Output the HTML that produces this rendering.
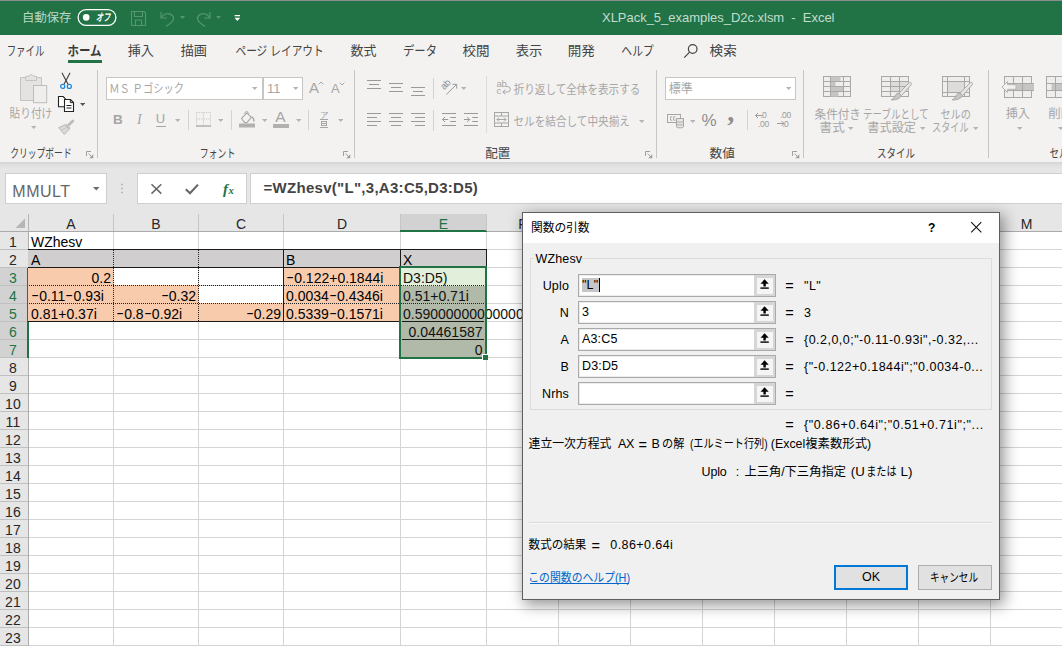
<!DOCTYPE html>
<html lang="ja"><head><meta charset="utf-8"><title>XLPack_5_examples_D2c.xlsm - Excel</title><style>
html,body{margin:0;padding:0}
body{width:1062px;height:646px;overflow:hidden;position:relative;background:#e6e6e6;font-family:"Liberation Sans",sans-serif}
#app{position:absolute;left:0;top:0;width:1062px;height:646px;overflow:hidden}
.a{position:absolute;box-sizing:border-box}
.t{white-space:pre}
.m{display:inline-block;width:8.2px;text-align:center;font-style:normal;transform:scaleX(1.65);position:relative;top:-1px}
.jt{position:absolute;overflow:hidden}
.jt svg{position:absolute;left:0;top:0;display:block}
.sk svg{transform:skewX(-12deg)}
.jt text{font-family:"Liberation Sans","Noto Sans CJK JP",sans-serif;white-space:pre}
</style></head><body><div id="app">
<div class="a" style="left:0px;top:0px;width:1062px;height:646px;background:#e6e6e6"></div>
<div class="a" style="left:0px;top:0px;width:1062px;height:1px;background:#8d8d8d"></div>
<div class="a" style="left:0px;top:1px;width:1062px;height:34px;background:#217346"></div>
<div class="a" style="left:0px;top:35px;width:1062px;height:127px;background:#f3f2f1"></div>
<div class="a" style="left:0px;top:162px;width:1062px;height:7px;background:linear-gradient(#d4d4d4,#e0e0e0 45%,#e6e6e6)"></div>
<div class="jt " style="left:22.00px;top:8.90px;width:51.00px;height:16.80px;font-size:9.6px"><svg width="51.00" height="16.80" viewBox="0 0 51.00 16.80" fill="#b9d8c8"><text x="0" y="12.96" font-size="12" textLength="49.5" lengthAdjust="spacingAndGlyphs">自動保存</text></svg></div>
<svg class="a" style="left:76px;top:8px" width="42" height="19" viewBox="0 0 42 19" ><rect x="2.1" y="1.6" width="37.8" height="15.8" rx="7.9" fill="none" stroke="#fff" stroke-width="1.3"/><circle cx="10.2" cy="9.4" r="3.3" fill="#fff"/></svg>
<div class="jt sk" style="left:95.20px;top:10.45px;width:17.30px;height:14.70px;font-size:8.4px"><svg width="17.30" height="14.70" viewBox="0 0 17.30 14.70" fill="#fff"><text x="1.56" y="11.34" font-size="10.5" font-weight="bold" textLength="14.5" lengthAdjust="spacingAndGlyphs">オフ</text></svg></div>
<svg class="a" style="left:130px;top:10px" width="18" height="18" viewBox="0 0 18 18" ><g fill="none" stroke="#559571" stroke-width="1.1"><path d="M1.5 1.5h12.6l1.4 1.4v12.6h-14z"/><path d="M4.5 1.5v5h8v-5"/><path d="M5.5 15.5v-5.5h6v5.5"/></g></svg>
<svg class="a" style="left:159px;top:10px" width="18" height="18" viewBox="0 0 18 18" ><g fill="none" stroke="#559571" stroke-width="1.2"><path d="M2 2v6h6"/><path d="M2.3 7.7c2.5-4.5 8-5.3 11-2.2c2.8 3 1.2 6.2-6.3 11"/></g></svg>
<svg class="a" style="left:180px;top:15.5px" width="5" height="3" viewBox="0 0 5 3" ><path d="M0 0h5 l-2.5 3 z" fill="#559571"/></svg>
<svg class="a" style="left:194px;top:10px" width="18" height="18" viewBox="0 0 18 18" ><g fill="none" stroke="#559571" stroke-width="1.2"><path d="M16 2v6h-6"/><path d="M15.7 7.7c-2.5-4.5-8-5.3-11-2.2c-2.8 3-1.2 6.2 6.3 11"/></g></svg>
<svg class="a" style="left:215.5px;top:15.5px" width="5" height="3" viewBox="0 0 5 3" ><path d="M0 0h5 l-2.5 3 z" fill="#559571"/></svg>
<svg class="a" style="left:234px;top:14px" width="7" height="8" viewBox="0 0 7 8" ><path d="M0.7 1h5.3v1.2h-5.3z M0.5 3.8h5.7l-2.85 3.3z" fill="#fff"/></svg>
<div class="a t" style="top:8.8px;font-size:13px;line-height:17px;color:#c3ddce;letter-spacing:-0.025px;left:602px;">XLPack_5_examples_D2c.xlsm  -  Excel</div>
<div class="jt " style="left:6.00px;top:41.20px;width:40.00px;height:18.20px;font-size:10.4px"><svg width="40.00" height="18.20" viewBox="0 0 40.00 18.20" fill="#444"><text x="0.63" y="14.04" font-size="13" textLength="37.8" lengthAdjust="spacingAndGlyphs">ファイル</text></svg></div>
<div class="jt " style="left:66.00px;top:41.20px;width:37.00px;height:18.20px;font-size:10.4px"><svg width="37.00" height="18.20" viewBox="0 0 37.00 18.20" fill="#3a3a3a"><text x="1.41" y="14.04" font-size="13" font-weight="bold" textLength="34.1" lengthAdjust="spacingAndGlyphs">ホーム</text></svg></div>
<div class="a" style="left:68px;top:60px;width:34px;height:3px;background:#217346"></div>
<div class="jt " style="left:126.00px;top:41.20px;width:29.40px;height:18.20px;font-size:10.4px"><svg width="29.40" height="18.20" viewBox="0 0 29.40 18.20" fill="#444"><text x="1.65" y="14.04" font-size="13" textLength="26.2" lengthAdjust="spacingAndGlyphs">挿入</text></svg></div>
<div class="jt " style="left:179.00px;top:41.20px;width:29.20px;height:18.20px;font-size:10.4px"><svg width="29.20" height="18.20" viewBox="0 0 29.20 18.20" fill="#444"><text x="1.63" y="14.04" font-size="13" textLength="26.3" lengthAdjust="spacingAndGlyphs">描画</text></svg></div>
<div class="jt " style="left:233.50px;top:41.20px;width:90.10px;height:18.20px;font-size:10.4px"><svg width="90.10" height="18.20" viewBox="0 0 90.10 18.20" fill="#444"><text x="1.43" y="14.04" font-size="13" textLength="88.3" lengthAdjust="spacingAndGlyphs">ページ レイアウト</text></svg></div>
<div class="jt " style="left:349.00px;top:41.20px;width:29.00px;height:18.20px;font-size:10.4px"><svg width="29.00" height="18.20" viewBox="0 0 29.00 18.20" fill="#444"><text x="1.56" y="14.04" font-size="13" textLength="25.9" lengthAdjust="spacingAndGlyphs">数式</text></svg></div>
<div class="jt " style="left:402.00px;top:41.20px;width:35.50px;height:18.20px;font-size:10.4px"><svg width="35.50" height="18.20" viewBox="0 0 35.50 18.20" fill="#444"><text x="1.04" y="14.04" font-size="13" textLength="33.9" lengthAdjust="spacingAndGlyphs">データ</text></svg></div>
<div class="jt " style="left:461.00px;top:41.20px;width:29.50px;height:18.20px;font-size:10.4px"><svg width="29.50" height="18.20" viewBox="0 0 29.50 18.20" fill="#444"><text x="1.57" y="14.04" font-size="13" textLength="27.1" lengthAdjust="spacingAndGlyphs">校閲</text></svg></div>
<div class="jt " style="left:514.00px;top:41.20px;width:29.50px;height:18.20px;font-size:10.4px"><svg width="29.50" height="18.20" viewBox="0 0 29.50 18.20" fill="#444"><text x="1.63" y="14.04" font-size="13" textLength="26.7" lengthAdjust="spacingAndGlyphs">表示</text></svg></div>
<div class="jt " style="left:567.00px;top:41.20px;width:29.50px;height:18.20px;font-size:10.4px"><svg width="29.50" height="18.20" viewBox="0 0 29.50 18.20" fill="#444"><text x="0.79" y="14.04" font-size="13" textLength="27.1" lengthAdjust="spacingAndGlyphs">開発</text></svg></div>
<div class="jt " style="left:620.30px;top:41.20px;width:35.70px;height:18.20px;font-size:10.4px"><svg width="35.70" height="18.20" viewBox="0 0 35.70 18.20" fill="#444"><text x="1.33" y="14.04" font-size="13" textLength="32.5" lengthAdjust="spacingAndGlyphs">ヘルプ</text></svg></div>
<svg class="a" style="left:683px;top:43px" width="16" height="16" viewBox="0 0 16 16" ><g fill="none" stroke="#444" stroke-width="1.2"><circle cx="9.7" cy="6" r="4.3"/><path d="M6.6 9.2L1.2 14.7"/></g></svg>
<div class="jt " style="left:708.00px;top:41.20px;width:30.00px;height:18.20px;font-size:10.4px"><svg width="30.00" height="18.20" viewBox="0 0 30.00 18.20" fill="#444"><text x="1.59" y="14.04" font-size="13" textLength="27.2" lengthAdjust="spacingAndGlyphs">検索</text></svg></div>
<svg class="a" style="left:19px;top:71px" width="30" height="34" viewBox="0 0 30 34" ><path d="M1.5 6.5h5.2v-1.2h3.2a2.3 2.3 0 0 1 4.4 0h3.2v1.2h5v23h-21z" fill="#e4e3e2" stroke="#c4c3c2"/><path d="M6.7 6.5v3h10.8v-3" fill="none" stroke="#c4c3c2"/><rect x="14.5" y="14.5" width="13.2" height="17.2" fill="#efeeed" stroke="#bdbcbb"/></svg>
<div class="jt " style="left:8.20px;top:105.20px;width:45.60px;height:16.80px;font-size:9.6px"><svg width="45.60" height="16.80" viewBox="0 0 45.60 16.80" fill="#a6a6a6"><text x="1.60" y="12.96" font-size="12" textLength="42.7" lengthAdjust="spacingAndGlyphs">貼り付け</text></svg></div>
<svg class="a" style="left:31px;top:126px" width="5.4" height="3" viewBox="0 0 5.4 3" ><path d="M0 0h5.4 l-2.7 3 z" fill="#b4b3b2"/></svg>
<svg class="a" style="left:59.2px;top:71.6px" width="14" height="18" viewBox="0 0 14 18" ><g fill="none" stroke="#444" stroke-width="1.15" stroke-linecap="round"><path d="M3.2 1.2L9 12.3"/><path d="M10.8 1.2L5 12.3"/></g><g fill="#fff" stroke="#1e86d9" stroke-width="1.3"><circle cx="3.7" cy="14.4" r="2"/><circle cx="10.3" cy="14.4" r="2"/></g></svg>
<svg class="a" style="left:57px;top:95px" width="19" height="18" viewBox="0 0 19 18" ><path d="M7.5 11.8h-6v-10.3h4.6l2.6 2.6" fill="#fff" stroke="#222" stroke-width="1.1"/><path d="M7.5 4.5h6l3 3v9h-9z" fill="#fff" stroke="#222" stroke-width="1.1"/><path d="M13.3 4.6v3h3" fill="none" stroke="#222" stroke-width="1"/><path d="M9.5 10.5h5M9.5 13h5" stroke="#222" stroke-width="1"/></svg>
<svg class="a" style="left:79.7px;top:103px" width="5.2" height="3" viewBox="0 0 5.2 3" ><path d="M0 0h5.2 l-2.6 3 z" fill="#555"/></svg>
<svg class="a" style="left:57px;top:119px" width="18" height="17" viewBox="0 0 18 17" ><path d="M15.800 2L12 5.800" stroke="#bdbcbb" stroke-width="2.700" stroke-linecap="round" fill="none"/><path d="M9.300 4.600l4.300 4.300-1.300 1.300-4.300-4.300z" fill="#c4c3c2"/><path d="M1.600 8.600L7.900 5.800l4.400 4.500-5 5.200z" fill="#dad9d8" stroke="#b7b6b5" stroke-width=".9" stroke-linejoin="round"/><path d="M4.300 11.300l5.800-3.200" stroke="#c2c1c0" stroke-width=".8" fill="none"/></svg>
<div class="jt " style="left:8.80px;top:145.00px;width:63.60px;height:16.80px;font-size:9.6px"><svg width="63.60" height="16.80" viewBox="0 0 63.60 16.80" fill="#444"><text x="1.13" y="12.96" font-size="12" textLength="61.6" lengthAdjust="spacingAndGlyphs">クリップボード</text></svg></div>
<svg class="a" style="left:86px;top:151px" width="8" height="8" viewBox="0 0 8 8" ><g fill="none" stroke="#a19f9d" stroke-width="1"><path d="M0.5 5V0.5H5"/><path d="M2.6 2.6L6 6"/></g><path d="M7.3 3.2v4.1H3.2z" fill="#a19f9d"/></svg>
<div class="a" style="left:97px;top:69.5px;width:1px;height:88px;background:#c8c6c4"></div>
<div class="a" style="left:106px;top:77px;width:157px;height:23px;background:#fff;border:1px solid #c8c6c4"></div>
<div class="a" style="left:263px;top:77px;width:40px;height:23px;background:#fff;border:1px solid #c8c6c4"></div>
<div class="jt " style="left:108.50px;top:80.20px;width:75.80px;height:16.80px;font-size:9.6px"><svg width="75.80" height="16.80" viewBox="0 0 75.80 16.80" fill="#a6a6a6"><text x="0.21" y="12.96" font-size="12" textLength="74.8" lengthAdjust="spacingAndGlyphs">ＭＳ Ｐゴシック</text></svg></div>
<svg class="a" style="left:252px;top:87px" width="5.4" height="3" viewBox="0 0 5.4 3" ><path d="M0 0h5.4 l-2.7 3 z" fill="#b4b3b2"/></svg>
<div class="a t" style="top:80.1px;font-size:13px;line-height:17px;color:#a6a6a6;left:267px;">11</div>
<svg class="a" style="left:293px;top:87px" width="5.4" height="3" viewBox="0 0 5.4 3" ><path d="M0 0h5.4 l-2.7 3 z" fill="#b4b3b2"/></svg>
<div class="a t" style="top:77.5px;font-size:15px;line-height:20px;color:#a6a6a6;left:309px;">A</div>
<svg class="a" style="left:318px;top:81px" width="6" height="4" viewBox="0 0 6 4" ><path d="M.6 3.4L3 1l2.4 2.4" fill="none" stroke="#a6a6a6" stroke-width="1"/></svg>
<div class="a t" style="top:80px;font-size:13px;line-height:17px;color:#a6a6a6;left:331px;">A</div>
<svg class="a" style="left:339px;top:82px" width="6" height="4" viewBox="0 0 6 4" ><path d="M.6 .6L3 3l2.4-2.4" fill="none" stroke="#a6a6a6" stroke-width="1"/></svg>
<div class="a t" style="top:110.5px;font-size:13.5px;line-height:18px;color:#a6a6a6;font-weight:bold;left:113px;">B</div>
<div class="a t" style="top:110.5px;font-size:14px;line-height:18px;color:#a6a6a6;font-style:italic;font-family:'Liberation Serif',serif;left:137px;">I</div>
<div class="a t" style="top:110.3px;font-size:13px;line-height:17px;color:#a6a6a6;left:155.8px;">U</div>
<div class="a" style="left:156px;top:125.6px;width:9.6px;height:1px;background:#a6a6a6"></div>
<svg class="a" style="left:175px;top:119px" width="5.4" height="3" viewBox="0 0 5.4 3" ><path d="M0 0h5.4 l-2.7 3 z" fill="#b4b3b2"/></svg>
<div class="a" style="left:188px;top:110px;width:1px;height:20px;background:#d4d2d0"></div>
<svg class="a" style="left:195px;top:111px" width="17" height="17" viewBox="0 0 17 17" ><g stroke="#c9c8c7" stroke-width="1" stroke-dasharray="1.2 1.2"><path d="M1.5 1.5h14M1.5 1.5v13M15.5 1.5v13M8.5 1.5v13M1.5 8h14"/></g><path d="M1 15h15" stroke="#a6a6a6" stroke-width="1.3"/></svg>
<svg class="a" style="left:218px;top:119px" width="5.4" height="3" viewBox="0 0 5.4 3" ><path d="M0 0h5.4 l-2.7 3 z" fill="#b4b3b2"/></svg>
<div class="a" style="left:231px;top:110px;width:1px;height:20px;background:#d4d2d0"></div>
<svg class="a" style="left:238px;top:110px" width="18" height="18" viewBox="0 0 18 18" ><path d="M3.500 8.300l5.300-5.500 4.600 4.600-4.600 5.200h-2.200z" fill="#f3f2f1" stroke="#a6a6a6" stroke-width="1.100" stroke-linejoin="round"/><path d="M7.200 4.400c-.6-1.800 .2-2.900 1.300-2.900 1.200 0 1.900 1.100 1.700 2.600" fill="none" stroke="#a6a6a6" stroke-width="1"/><path d="M13.600 6.800c1.700 1 2.500 2.500 2.300 4.800" fill="none" stroke="#a6a6a6" stroke-width="1.300"/><rect x="1" y="13.500" width="16" height="4" fill="#b3b1af"/></svg>
<svg class="a" style="left:262px;top:119px" width="5.4" height="3" viewBox="0 0 5.4 3" ><path d="M0 0h5.4 l-2.7 3 z" fill="#b4b3b2"/></svg>
<div class="a t" style="top:106.6px;font-size:15.5px;line-height:20px;color:#a6a6a6;left:275.3px;">A</div>
<div class="a" style="left:273px;top:123.5px;width:16px;height:4px;background:#b3b1af"></div>
<svg class="a" style="left:296px;top:119px" width="5.4" height="3" viewBox="0 0 5.4 3" ><path d="M0 0h5.4 l-2.7 3 z" fill="#b4b3b2"/></svg>
<div class="a" style="left:308px;top:110px;width:1px;height:20px;background:#d4d2d0"></div>
<div class="jt " style="left:318.50px;top:108.60px;width:11.00px;height:11.20px;font-size:6.4px"><svg width="11.00" height="11.20" viewBox="0 0 11.00 11.20" fill="#a6a6a6"><text x="0.92" y="8.64" font-size="8" textLength="8.6" lengthAdjust="spacingAndGlyphs">ア</text></svg></div>
<svg class="a" style="left:319px;top:118px" width="10" height="11" viewBox="0 0 10 11" ><g stroke="#a6a6a6" stroke-width="1" fill="none"><path d="M1 1.500h8M1 9.500h8"/><rect x="2.500" y="3.500" width="5" height="4"/><path d="M2.500 5.500h5"/></g></svg>
<svg class="a" style="left:338px;top:119px" width="5.4" height="3" viewBox="0 0 5.4 3" ><path d="M0 0h5.4 l-2.7 3 z" fill="#b4b3b2"/></svg>
<div class="jt " style="left:199.00px;top:145.00px;width:37.00px;height:16.80px;font-size:9.6px"><svg width="37.00" height="16.80" viewBox="0 0 37.00 16.80" fill="#444"><text x="0.71" y="12.96" font-size="12" textLength="35.6" lengthAdjust="spacingAndGlyphs">フォント</text></svg></div>
<svg class="a" style="left:343px;top:151px" width="8" height="8" viewBox="0 0 8 8" ><g fill="none" stroke="#a19f9d" stroke-width="1"><path d="M0.5 5V0.5H5"/><path d="M2.6 2.6L6 6"/></g><path d="M7.3 3.2v4.1H3.2z" fill="#a19f9d"/></svg>
<div class="a" style="left:354px;top:69.5px;width:1px;height:88px;background:#c8c6c4"></div>
<svg class="a" style="left:367px;top:80px" width="16" height="16" viewBox="0 0 16 16" ><g stroke="#9a9998" stroke-width="1"><path d="M0 0.5H14"/><path d="M2 4.5H12"/><path d="M0 8.5H14"/></g></svg>
<svg class="a" style="left:389px;top:83px" width="16" height="16" viewBox="0 0 16 16" ><g stroke="#9a9998" stroke-width="1"><path d="M0 0.5H14"/><path d="M2 4.5H12"/><path d="M0 8.5H14"/></g></svg>
<svg class="a" style="left:411px;top:87px" width="16" height="16" viewBox="0 0 16 16" ><g stroke="#9a9998" stroke-width="1"><path d="M0 0.5H14"/><path d="M2 4.5H12"/><path d="M0 8.5H14"/></g></svg>
<div class="a" style="left:433px;top:78px;width:1px;height:21px;background:#d4d2d0"></div>
<svg class="a" style="left:439px;top:78px" width="20" height="19" viewBox="0 0 20 19" ><g fill="none" stroke="#9a9998" stroke-width="1"><path d="M7.300 16.500L17.500 6.500"/><path d="M13.400 6.300h4.300v4.300"/></g><text x="0" y="0" font-size="9.5" fill="#8f8e8d" font-family="Liberation Sans, sans-serif" letter-spacing="-.3" transform="translate(5.300,12.300) rotate(-47)">ab</text></svg>
<svg class="a" style="left:461px;top:87px" width="5.4" height="3" viewBox="0 0 5.4 3" ><path d="M0 0h5.4 l-2.7 3 z" fill="#b4b3b2"/></svg>
<svg class="a" style="left:367px;top:113px" width="16" height="16" viewBox="0 0 16 16" ><g stroke="#9a9998" stroke-width="1"><path d="M0 0.5H14"/><path d="M0 4.5H10"/><path d="M0 8.5H14"/><path d="M0 12.5H10"/></g></svg>
<svg class="a" style="left:389px;top:113px" width="16" height="16" viewBox="0 0 16 16" ><g stroke="#9a9998" stroke-width="1"><path d="M0 0.5H14"/><path d="M2 4.5H12"/><path d="M0 8.5H14"/><path d="M2 12.5H12"/></g></svg>
<svg class="a" style="left:411px;top:113px" width="16" height="16" viewBox="0 0 16 16" ><g stroke="#9a9998" stroke-width="1"><path d="M0 0.5H14"/><path d="M4 4.5H14"/><path d="M0 8.5H14"/><path d="M4 12.5H14"/></g></svg>
<div class="a" style="left:433px;top:110px;width:1px;height:21px;background:#d4d2d0"></div>
<svg class="a" style="left:442px;top:113px" width="16" height="14" viewBox="0 0 16 14" ><g stroke="#9a9998" stroke-width="1" fill="none"><path d="M0 .5h14M8.300 4.500h5.700M8.300 8.500h5.700M0 12.500h14"/><path d="M6.200 6.500h-5.700M3 4L.5 6.500 3 9"/></g></svg>
<svg class="a" style="left:464px;top:113px" width="16" height="14" viewBox="0 0 16 14" ><g stroke="#9a9998" stroke-width="1" fill="none"><path d="M0 .5h14M8.300 4.500h5.700M8.300 8.500h5.700M0 12.500h14"/><path d="M0 6.500h5.700M3.200 4L5.700 6.500 3.200 9"/></g></svg>
<div class="a" style="left:486px;top:75.5px;width:1px;height:57.5px;background:#dddbd9"></div>
<div class="a t" style="left:496.500px;top:79.500px;font-size:9.5px;line-height:8px;color:#a6a6a6;letter-spacing:-.2px">ab</div>
<div class="a t" style="left:496.500px;top:87px;font-size:9.5px;line-height:8px;color:#a6a6a6">c</div>
<svg class="a" style="left:501px;top:86px" width="10" height="10" viewBox="0 0 10 10" ><g fill="none" stroke="#a6a6a6" stroke-width="1"><path d="M5 .5h1.500a2.500 2.500 0 0 1 0 5.500h-4.500"/><path d="M4.300 3.600L1.800 6l2.500 2.400"/></g></svg>
<div class="jt " style="left:512.00px;top:80.90px;width:129.00px;height:16.80px;font-size:9.6px"><svg width="129.00" height="16.80" viewBox="0 0 129.00 16.80" fill="#a6a6a6"><text x="1.68" y="12.96" font-size="12" textLength="126.7" lengthAdjust="spacingAndGlyphs">折り返して全体を表示する</text></svg></div>
<svg class="a" style="left:493px;top:111px" width="17" height="17" viewBox="0 0 17 17" ><g fill="none" stroke="#a6a6a6" stroke-width="1"><rect x="1.500" y="1.500" width="14" height="14"/><path d="M1.500 5h14M1.500 12h14M8.500 1.500V5M8.500 12v3.500"/><path d="M4 8.500h9M6 6.500L4 8.500l2 2M11 6.500l2 2-2 2"/></g></svg>
<div class="jt " style="left:512.00px;top:112.60px;width:119.00px;height:16.80px;font-size:9.6px"><svg width="119.00" height="16.80" viewBox="0 0 119.00 16.80" fill="#a6a6a6"><text x="1.42" y="12.96" font-size="12" textLength="116.5" lengthAdjust="spacingAndGlyphs">セルを結合して中央揃え</text></svg></div>
<svg class="a" style="left:639px;top:119.5px" width="5.4" height="3" viewBox="0 0 5.4 3" ><path d="M0 0h5.4 l-2.7 3 z" fill="#b4b3b2"/></svg>
<div class="jt " style="left:483.50px;top:145.00px;width:28.00px;height:16.80px;font-size:9.6px"><svg width="28.00" height="16.80" viewBox="0 0 28.00 16.80" fill="#444"><text x="1.28" y="12.96" font-size="12" textLength="25.2" lengthAdjust="spacingAndGlyphs">配置</text></svg></div>
<svg class="a" style="left:645px;top:151px" width="8" height="8" viewBox="0 0 8 8" ><g fill="none" stroke="#a19f9d" stroke-width="1"><path d="M0.5 5V0.5H5"/><path d="M2.6 2.6L6 6"/></g><path d="M7.3 3.2v4.1H3.2z" fill="#a19f9d"/></svg>
<div class="a" style="left:656px;top:69.5px;width:1px;height:88px;background:#c8c6c4"></div>
<div class="a" style="left:665px;top:77px;width:131px;height:23px;background:#fff;border:1px solid #c8c6c4"></div>
<div class="jt " style="left:666.50px;top:80.20px;width:27.00px;height:16.80px;font-size:9.6px"><svg width="27.00" height="16.80" viewBox="0 0 27.00 16.80" fill="#a6a6a6"><text x="1.63" y="12.96" font-size="12" textLength="24" lengthAdjust="spacingAndGlyphs">標準</text></svg></div>
<svg class="a" style="left:785.5px;top:87px" width="5.4" height="3" viewBox="0 0 5.4 3" ><path d="M0 0h5.4 l-2.7 3 z" fill="#b4b3b2"/></svg>
<svg class="a" style="left:667px;top:113px" width="18" height="16" viewBox="0 0 18 16" ><rect x=".5" y="1.500" width="13" height="8" fill="#f3f2f1" stroke="#a6a6a6"/><path d="M5.300 3.800h-1.800v3.400h1.800M8.500 3.800h-1.800v3.400h1.800" fill="none" stroke="#a6a6a6" stroke-width=".9"/><path d="M9.500 5.500h7v8.300c0 1.400-7 1.400-7 0z" fill="#e6e5e4" stroke="#a6a6a6"/><path d="M9.500 8.200c0 1.300 7 1.300 7 0M9.500 11c0 1.300 7 1.300 7 0" fill="none" stroke="#a6a6a6" stroke-width=".9"/></svg>
<svg class="a" style="left:690px;top:119.5px" width="5.4" height="3" viewBox="0 0 5.4 3" ><path d="M0 0h5.4 l-2.7 3 z" fill="#b4b3b2"/></svg>
<div class="a t" style="top:109.5px;font-size:17px;line-height:22px;color:#8f8e8d;left:701.5px;">%</div>
<div class="a t" style="top:94.3px;font-size:28px;line-height:36px;color:#8f8e8d;font-weight:bold;font-family:'Liberation Serif',serif;left:727.3px;">,</div>
<div class="a" style="left:747px;top:110px;width:1px;height:20px;background:#d4d2d0"></div>
<div class="a t" style="left:762px;top:111px;font-size:8.5px;line-height:8px;color:#9c9b9a;letter-spacing:-.3px">0</div>
<div class="a t" style="left:758px;top:119.500px;font-size:8.5px;line-height:8px;color:#9c9b9a;letter-spacing:-.3px">.00</div>
<svg class="a" style="left:755px;top:111.5px" width="8" height="7" viewBox="0 0 8 7" ><g fill="none" stroke="#9c9b9a" stroke-width="1"><path d="M7.500 3.500h-7M3 1L.5 3.500 3 6"/></g></svg>
<div class="a t" style="left:760.5px;top:111px;font-size:8.5px;line-height:8px;color:#9c9b9a">.</div>
<div class="a t" style="left:780px;top:111px;font-size:8.5px;line-height:8px;color:#9c9b9a;letter-spacing:-.3px">.00</div>
<div class="a t" style="left:784px;top:119.500px;font-size:8.5px;line-height:8px;color:#9c9b9a;letter-spacing:-.3px">0</div>
<svg class="a" style="left:777px;top:120px" width="8" height="7" viewBox="0 0 8 7" ><g fill="none" stroke="#9c9b9a" stroke-width="1"><path d="M0 3.500h7M4.500 1L7 3.500 4.500 6"/></g></svg>
<div class="a t" style="left:782.5px;top:119.500px;font-size:8.5px;line-height:8px;color:#9c9b9a">.</div>
<div class="jt " style="left:708.00px;top:145.00px;width:28.50px;height:16.80px;font-size:9.6px"><svg width="28.50" height="16.80" viewBox="0 0 28.50 16.80" fill="#444"><text x="1.57" y="12.96" font-size="12" textLength="25.4" lengthAdjust="spacingAndGlyphs">数値</text></svg></div>
<svg class="a" style="left:792px;top:151px" width="8" height="8" viewBox="0 0 8 8" ><g fill="none" stroke="#a19f9d" stroke-width="1"><path d="M0.5 5V0.5H5"/><path d="M2.6 2.6L6 6"/></g><path d="M7.3 3.2v4.1H3.2z" fill="#a19f9d"/></svg>
<div class="a" style="left:803px;top:69.5px;width:1px;height:88px;background:#c8c6c4"></div>
<svg class="a" style="left:823px;top:75px" width="29" height="23" viewBox="0 0 29 23" ><rect x=".5" y="1.500" width="27" height="20" fill="#efeeed" stroke="#a9a8a7"/><rect x="7.500" y="1.500" width="10" height="5" fill="#c6c5c4"/><rect x="7.500" y="6.500" width="5" height="5" fill="#c6c5c4"/><rect x="7.500" y="11.500" width="13" height="5" fill="#c6c5c4"/><rect x="7.500" y="16.500" width="8" height="5" fill="#c6c5c4"/><path d="M.5 6.500h27M.5 11.500h27M.5 16.500h27M7.500 1.500v20M20.500 1.500v20" stroke="#a9a8a7" fill="none"/></svg>
<div class="jt " style="left:812.50px;top:105.60px;width:48.50px;height:16.80px;font-size:9.6px"><svg width="48.50" height="16.80" viewBox="0 0 48.50 16.80" fill="#a6a6a6"><text x="1.55" y="12.96" font-size="12" textLength="46.4" lengthAdjust="spacingAndGlyphs">条件付き</text></svg></div>
<div class="jt " style="left:818.00px;top:119.20px;width:28.50px;height:16.80px;font-size:9.6px"><svg width="28.50" height="16.80" viewBox="0 0 28.50 16.80" fill="#a6a6a6"><text x="1.30" y="12.96" font-size="12" textLength="25.6" lengthAdjust="spacingAndGlyphs">書式</text></svg></div>
<svg class="a" style="left:848px;top:126.5px" width="5.4" height="3" viewBox="0 0 5.4 3" ><path d="M0 0h5.4 l-2.7 3 z" fill="#b4b3b2"/></svg>
<svg class="a" style="left:881px;top:75px" width="32" height="27" viewBox="0 0 32 27" ><rect x=".5" y="1.500" width="27" height="20" fill="#efeeed" stroke="#a9a8a7"/><rect x="9.500" y="6.500" width="18" height="10" fill="#dddcdb"/><path d="M.5 6.500h27M.5 11.500h27M.5 16.500h27M9.500 1.500v20M18.500 1.500v20" stroke="#a9a8a7" fill="none"/><path d="M29.800 7.500c1 .8 .8 1.700 .2 2.500l-9.500 10.500-2.500-2.200 9.800-10.300c.7-.8 1.400-1 2-.5z" fill="#e9e8e7" stroke="#a9a8a7"/><path d="M18 18.300l2.500 2.200c-1.500 3.300-6 4.800-10.500 4.300 2.500-1 3.500-2.300 4.300-4.300.7-1.700 2.200-2.500 3.700-2.200z" fill="#c6c5c4" stroke="#a9a8a7"/></svg>
<div class="jt " style="left:862.00px;top:105.60px;width:67.50px;height:16.80px;font-size:9.6px"><svg width="67.50" height="16.80" viewBox="0 0 67.50 16.80" fill="#a6a6a6"><text x="1.11" y="12.96" font-size="12" textLength="65.5" lengthAdjust="spacingAndGlyphs">テーブルとして</text></svg></div>
<div class="jt " style="left:865.50px;top:119.20px;width:51.50px;height:16.80px;font-size:9.6px"><svg width="51.50" height="16.80" viewBox="0 0 51.50 16.80" fill="#a6a6a6"><text x="1.33" y="12.96" font-size="12" textLength="48.7" lengthAdjust="spacingAndGlyphs">書式設定</text></svg></div>
<svg class="a" style="left:919.5px;top:126.5px" width="5.4" height="3" viewBox="0 0 5.4 3" ><path d="M0 0h5.4 l-2.7 3 z" fill="#b4b3b2"/></svg>
<svg class="a" style="left:941.5px;top:75px" width="32" height="27" viewBox="0 0 32 27" ><rect x=".5" y="1.500" width="27" height="20" fill="#efeeed" stroke="#a9a8a7"/><rect x="5.500" y="6.500" width="17" height="11" fill="#dddcdb"/><path d="M.5 6.500h27M.5 17.500h27M5.500 1.500v20M22.500 1.500v20" stroke="#a9a8a7" fill="none"/><path d="M29.800 7.500c1 .8 .8 1.700 .2 2.500l-9.500 10.500-2.500-2.200 9.800-10.300c.7-.8 1.400-1 2-.5z" fill="#e9e8e7" stroke="#a9a8a7"/><path d="M18 18.300l2.500 2.200c-1.500 3.300-6 4.800-10.500 4.300 2.500-1 3.500-2.300 4.300-4.300.7-1.700 2.200-2.500 3.700-2.200z" fill="#c6c5c4" stroke="#a9a8a7"/></svg>
<div class="jt " style="left:939.00px;top:105.60px;width:33.00px;height:16.80px;font-size:9.6px"><svg width="33.00" height="16.80" viewBox="0 0 33.00 16.80" fill="#a6a6a6"><text x="1.39" y="12.96" font-size="12" textLength="30.5" lengthAdjust="spacingAndGlyphs">セルの</text></svg></div>
<div class="jt " style="left:930.50px;top:119.20px;width:39.00px;height:16.80px;font-size:9.6px"><svg width="39.00" height="16.80" viewBox="0 0 39.00 16.80" fill="#a6a6a6"><text x="1.09" y="12.96" font-size="12" textLength="36.4" lengthAdjust="spacingAndGlyphs">スタイル</text></svg></div>
<svg class="a" style="left:972.5px;top:126.5px" width="5.4" height="3" viewBox="0 0 5.4 3" ><path d="M0 0h5.4 l-2.7 3 z" fill="#b4b3b2"/></svg>
<div class="jt " style="left:875.50px;top:145.00px;width:40.50px;height:16.80px;font-size:9.6px"><svg width="40.50" height="16.80" viewBox="0 0 40.50 16.80" fill="#444"><text x="1.05" y="12.96" font-size="12" textLength="37.9" lengthAdjust="spacingAndGlyphs">スタイル</text></svg></div>
<div class="a" style="left:988px;top:69.5px;width:1px;height:88px;background:#c8c6c4"></div>
<svg class="a" style="left:1001px;top:75px" width="35" height="24" viewBox="0 0 35 24" ><rect x="3.500" y="1.500" width="27" height="21" fill="#efeeed" stroke="#a9a8a7"/><rect x="12.500" y="8.500" width="20.500" height="7" fill="#c6c5c4"/><path d="M3.500 8.500h29.500M3.500 15.500h29.500M12.500 1.500v21M21.500 1.500v21" stroke="#a9a8a7" fill="none"/><path d="M1 12l5.500-5.500v3.200h8.500v4.600h-8.500v3.200z" fill="#f3f2f1" stroke="#b4b3b2" stroke-width="1" stroke-linejoin="round"/></svg>
<div class="jt " style="left:1004.00px;top:105.40px;width:27.50px;height:16.80px;font-size:9.6px"><svg width="27.50" height="16.80" viewBox="0 0 27.50 16.80" fill="#a6a6a6"><text x="1.67" y="12.96" font-size="12" textLength="24.2" lengthAdjust="spacingAndGlyphs">挿入</text></svg></div>
<svg class="a" style="left:1016.7px;top:126.5px" width="5.4" height="3" viewBox="0 0 5.4 3" ><path d="M0 0h5.4 l-2.7 3 z" fill="#b4b3b2"/></svg>
<svg class="a" style="left:1046px;top:75px" width="16" height="24" viewBox="0 0 16 24" ><rect x=".5" y="1.500" width="27" height="21" fill="#efeeed" stroke="#a9a8a7"/><rect x="5.500" y="8.500" width="12" height="7" fill="#c6c5c4"/><path d="M.5 8.500h16M.5 15.500h16M9.500 1.500v21" stroke="#a9a8a7" fill="none"/></svg>
<div class="jt " style="left:1046.70px;top:105.40px;width:27.80px;height:16.80px;font-size:9.6px"><svg width="27.80" height="16.80" viewBox="0 0 27.80 16.80" fill="#a6a6a6"><text x="1.27" y="12.96" font-size="12" textLength="24.9" lengthAdjust="spacingAndGlyphs">削除</text></svg></div>
<svg class="a" style="left:1058px;top:126.5px" width="5.4" height="3" viewBox="0 0 5.4 3" ><path d="M0 0h5.4 l-2.7 3 z" fill="#b4b3b2"/></svg>
<div class="jt " style="left:1047.50px;top:145.00px;width:22.00px;height:16.80px;font-size:9.6px"><svg width="22.00" height="16.80" viewBox="0 0 22.00 16.80" fill="#444"><text x="1.43" y="12.96" font-size="12" textLength="19" lengthAdjust="spacingAndGlyphs">セル</text></svg></div>
<div class="a" style="left:5px;top:173px;width:102px;height:31px;background:#fff;border:1px solid #cfcfcf"></div>
<div class="a t" style="top:180.5px;font-size:16px;line-height:21px;color:#666;letter-spacing:0.515px;left:12.3px;">MMULT</div>
<svg class="a" style="left:93.2px;top:187px" width="6.6" height="3.6" viewBox="0 0 6.6 3.6" ><path d="M0 0h6.6 l-3.3 3.6 z" fill="#6b6b6b"/></svg>
<svg class="a" style="left:120px;top:183px" width="4" height="11" viewBox="0 0 4 11" ><g fill="#a3a3a3"><rect x="1.300" y=".8" width="1.400" height="1.400"/><rect x="1.300" y="4.800" width="1.400" height="1.400"/><rect x="1.300" y="8.800" width="1.400" height="1.400"/></g></svg>
<div class="a" style="left:137px;top:173px;width:110px;height:31px;background:#fff;border:1px solid #cfcfcf"></div>
<svg class="a" style="left:149.5px;top:182.5px" width="13" height="12" viewBox="0 0 13 12" ><path d="M1.500 1.200L11.300 10.600M11.300 1.200L1.500 10.600" stroke="#666" stroke-width="1.500" fill="none"/></svg>
<svg class="a" style="left:184px;top:182.5px" width="16" height="12" viewBox="0 0 16 12" ><path d="M1.800 6.300L6 10.200L14 1.600" stroke="#666" stroke-width="2.100" fill="none"/></svg>
<div class="a t" style="top:178.5px;font-size:15px;line-height:20px;color:#217346;font-weight:bold;font-style:italic;font-family:'Liberation Serif',serif;left:223px;">f</div>
<div class="a t" style="top:183.8px;font-size:10.5px;line-height:14px;color:#217346;font-weight:bold;font-style:italic;font-family:'Liberation Serif',serif;left:228.5px;">x</div>
<div class="a" style="left:250px;top:173px;width:820px;height:31px;background:#fff;border:1px solid #cfcfcf"></div>
<div class="a t" style="top:178px;font-size:15px;line-height:20px;color:#444;font-weight:bold;letter-spacing:0.287px;left:263.5px;">=WZhesv(&quot;L&quot;,3,A3:C5,D3:D5)</div>
<div class="a" style="left:29px;top:232px;width:1033px;height:414px;background:#fff"></div>
<div class="a" style="left:113px;top:232px;width:1px;height:414px;background:#d4d4d4"></div><div class="a" style="left:198px;top:232px;width:1px;height:414px;background:#d4d4d4"></div><div class="a" style="left:283px;top:232px;width:1px;height:414px;background:#d4d4d4"></div><div class="a" style="left:400px;top:232px;width:1px;height:414px;background:#d4d4d4"></div><div class="a" style="left:486px;top:232px;width:1px;height:414px;background:#d4d4d4"></div><div class="a" style="left:558px;top:232px;width:1px;height:414px;background:#d4d4d4"></div><div class="a" style="left:630px;top:232px;width:1px;height:414px;background:#d4d4d4"></div><div class="a" style="left:702px;top:232px;width:1px;height:414px;background:#d4d4d4"></div><div class="a" style="left:774px;top:232px;width:1px;height:414px;background:#d4d4d4"></div><div class="a" style="left:846px;top:232px;width:1px;height:414px;background:#d4d4d4"></div><div class="a" style="left:918px;top:232px;width:1px;height:414px;background:#d4d4d4"></div><div class="a" style="left:990px;top:232px;width:1px;height:414px;background:#d4d4d4"></div>
<div class="a" style="left:29px;top:249px;width:1033px;height:1px;background:#d4d4d4"></div><div class="a" style="left:29px;top:267px;width:1033px;height:1px;background:#d4d4d4"></div><div class="a" style="left:29px;top:285px;width:1033px;height:1px;background:#d4d4d4"></div><div class="a" style="left:29px;top:303px;width:1033px;height:1px;background:#d4d4d4"></div><div class="a" style="left:29px;top:321px;width:1033px;height:1px;background:#d4d4d4"></div><div class="a" style="left:29px;top:339px;width:1033px;height:1px;background:#d4d4d4"></div><div class="a" style="left:29px;top:357px;width:1033px;height:1px;background:#d4d4d4"></div><div class="a" style="left:29px;top:375px;width:1033px;height:1px;background:#d4d4d4"></div><div class="a" style="left:29px;top:393px;width:1033px;height:1px;background:#d4d4d4"></div><div class="a" style="left:29px;top:411px;width:1033px;height:1px;background:#d4d4d4"></div><div class="a" style="left:29px;top:429px;width:1033px;height:1px;background:#d4d4d4"></div><div class="a" style="left:29px;top:447px;width:1033px;height:1px;background:#d4d4d4"></div><div class="a" style="left:29px;top:465px;width:1033px;height:1px;background:#d4d4d4"></div><div class="a" style="left:29px;top:483px;width:1033px;height:1px;background:#d4d4d4"></div><div class="a" style="left:29px;top:501px;width:1033px;height:1px;background:#d4d4d4"></div><div class="a" style="left:29px;top:519px;width:1033px;height:1px;background:#d4d4d4"></div><div class="a" style="left:29px;top:537px;width:1033px;height:1px;background:#d4d4d4"></div><div class="a" style="left:29px;top:555px;width:1033px;height:1px;background:#d4d4d4"></div><div class="a" style="left:29px;top:573px;width:1033px;height:1px;background:#d4d4d4"></div><div class="a" style="left:29px;top:591px;width:1033px;height:1px;background:#d4d4d4"></div><div class="a" style="left:29px;top:609px;width:1033px;height:1px;background:#d4d4d4"></div><div class="a" style="left:29px;top:627px;width:1033px;height:1px;background:#d4d4d4"></div><div class="a" style="left:29px;top:645px;width:1033px;height:1px;background:#d4d4d4"></div>
<div class="a" style="left:0px;top:214px;width:1062px;height:17px;background:#e6e6e6"></div>
<div class="a" style="left:0px;top:231px;width:1062px;height:1px;background:#ababab"></div>
<div class="a" style="left:113px;top:214px;width:1px;height:17px;background:#c6c6c6"></div>
<div class="a t" style="top:215px;font-size:14px;line-height:18px;color:#262626;left:51px;width:40px;text-align:center;">A</div>
<div class="a" style="left:198px;top:214px;width:1px;height:17px;background:#c6c6c6"></div>
<div class="a t" style="top:215px;font-size:14px;line-height:18px;color:#262626;left:136px;width:40px;text-align:center;">B</div>
<div class="a" style="left:283px;top:214px;width:1px;height:17px;background:#c6c6c6"></div>
<div class="a t" style="top:215px;font-size:14px;line-height:18px;color:#262626;left:221px;width:40px;text-align:center;">C</div>
<div class="a" style="left:400px;top:214px;width:1px;height:17px;background:#c6c6c6"></div>
<div class="a t" style="top:215px;font-size:14px;line-height:18px;color:#262626;left:322px;width:40px;text-align:center;">D</div>
<div class="a" style="left:401px;top:214px;width:85px;height:16px;background:#d2d2d2"></div>
<div class="a" style="left:400px;top:230px;width:87px;height:2px;background:#217346"></div>
<div class="a" style="left:486px;top:214px;width:1px;height:17px;background:#c6c6c6"></div>
<div class="a t" style="top:215px;font-size:14px;line-height:18px;color:#217346;left:423.5px;width:40px;text-align:center;">E</div>
<div class="a" style="left:558px;top:214px;width:1px;height:17px;background:#c6c6c6"></div>
<div class="a t" style="top:215px;font-size:14px;line-height:18px;color:#262626;left:502.5px;width:40px;text-align:center;">F</div>
<div class="a" style="left:630px;top:214px;width:1px;height:17px;background:#c6c6c6"></div>
<div class="a t" style="top:215px;font-size:14px;line-height:18px;color:#262626;left:574.5px;width:40px;text-align:center;">G</div>
<div class="a" style="left:702px;top:214px;width:1px;height:17px;background:#c6c6c6"></div>
<div class="a t" style="top:215px;font-size:14px;line-height:18px;color:#262626;left:646.5px;width:40px;text-align:center;">H</div>
<div class="a" style="left:774px;top:214px;width:1px;height:17px;background:#c6c6c6"></div>
<div class="a t" style="top:215px;font-size:14px;line-height:18px;color:#262626;left:718.5px;width:40px;text-align:center;">I</div>
<div class="a" style="left:846px;top:214px;width:1px;height:17px;background:#c6c6c6"></div>
<div class="a t" style="top:215px;font-size:14px;line-height:18px;color:#262626;left:790.5px;width:40px;text-align:center;">J</div>
<div class="a" style="left:918px;top:214px;width:1px;height:17px;background:#c6c6c6"></div>
<div class="a t" style="top:215px;font-size:14px;line-height:18px;color:#262626;left:862.5px;width:40px;text-align:center;">K</div>
<div class="a" style="left:990px;top:214px;width:1px;height:17px;background:#c6c6c6"></div>
<div class="a t" style="top:215px;font-size:14px;line-height:18px;color:#262626;left:934.5px;width:40px;text-align:center;">L</div>
<div class="a" style="left:1062px;top:214px;width:1px;height:17px;background:#c6c6c6"></div>
<div class="a t" style="top:215px;font-size:14px;line-height:18px;color:#262626;left:1006.5px;width:40px;text-align:center;">M</div>
<svg class="a" style="left:15px;top:218px" width="11" height="11" viewBox="0 0 11 11" ><path d="M10 .5v9.500h-9.500z" fill="#b6b6b6"/></svg>
<div class="a" style="left:28px;top:214px;width:1px;height:17px;background:#b5b5b5"></div>
<div class="a" style="left:0px;top:232px;width:28px;height:414px;background:#e6e6e6"></div>
<div class="a" style="left:28px;top:232px;width:1px;height:414px;background:#ababab"></div>
<div class="a" style="left:0px;top:249px;width:28px;height:1px;background:#c0c0c0"></div>
<div class="a t" style="top:233px;font-size:14px;line-height:18px;color:#262626;letter-spacing:0.2px;left:-1px;width:28px;text-align:center;">1</div>
<div class="a" style="left:0px;top:267px;width:28px;height:1px;background:#c0c0c0"></div>
<div class="a t" style="top:251px;font-size:14px;line-height:18px;color:#262626;letter-spacing:0.2px;left:-1px;width:28px;text-align:center;">2</div>
<div class="a" style="left:0px;top:268px;width:28px;height:17px;background:#d2d2d2"></div>
<div class="a" style="left:0px;top:285px;width:28px;height:1px;background:#c0c0c0"></div>
<div class="a t" style="top:269px;font-size:14px;line-height:18px;color:#217346;letter-spacing:0.2px;left:-1px;width:28px;text-align:center;">3</div>
<div class="a" style="left:0px;top:286px;width:28px;height:17px;background:#d2d2d2"></div>
<div class="a" style="left:0px;top:303px;width:28px;height:1px;background:#c0c0c0"></div>
<div class="a t" style="top:287px;font-size:14px;line-height:18px;color:#217346;letter-spacing:0.2px;left:-1px;width:28px;text-align:center;">4</div>
<div class="a" style="left:0px;top:304px;width:28px;height:17px;background:#d2d2d2"></div>
<div class="a" style="left:0px;top:321px;width:28px;height:1px;background:#c0c0c0"></div>
<div class="a t" style="top:305px;font-size:14px;line-height:18px;color:#217346;letter-spacing:0.2px;left:-1px;width:28px;text-align:center;">5</div>
<div class="a" style="left:0px;top:322px;width:28px;height:17px;background:#d2d2d2"></div>
<div class="a" style="left:0px;top:339px;width:28px;height:1px;background:#c0c0c0"></div>
<div class="a t" style="top:323px;font-size:14px;line-height:18px;color:#217346;letter-spacing:0.2px;left:-1px;width:28px;text-align:center;">6</div>
<div class="a" style="left:0px;top:340px;width:28px;height:17px;background:#d2d2d2"></div>
<div class="a" style="left:0px;top:357px;width:28px;height:1px;background:#c0c0c0"></div>
<div class="a t" style="top:341px;font-size:14px;line-height:18px;color:#217346;letter-spacing:0.2px;left:-1px;width:28px;text-align:center;">7</div>
<div class="a" style="left:0px;top:375px;width:28px;height:1px;background:#c0c0c0"></div>
<div class="a t" style="top:359px;font-size:14px;line-height:18px;color:#262626;letter-spacing:0.2px;left:-1px;width:28px;text-align:center;">8</div>
<div class="a" style="left:0px;top:393px;width:28px;height:1px;background:#c0c0c0"></div>
<div class="a t" style="top:377px;font-size:14px;line-height:18px;color:#262626;letter-spacing:0.2px;left:-1px;width:28px;text-align:center;">9</div>
<div class="a" style="left:0px;top:411px;width:28px;height:1px;background:#c0c0c0"></div>
<div class="a t" style="top:395px;font-size:14px;line-height:18px;color:#262626;letter-spacing:0.2px;left:-1px;width:28px;text-align:center;">10</div>
<div class="a" style="left:0px;top:429px;width:28px;height:1px;background:#c0c0c0"></div>
<div class="a t" style="top:413px;font-size:14px;line-height:18px;color:#262626;letter-spacing:0.2px;left:-1px;width:28px;text-align:center;">11</div>
<div class="a" style="left:0px;top:447px;width:28px;height:1px;background:#c0c0c0"></div>
<div class="a t" style="top:431px;font-size:14px;line-height:18px;color:#262626;letter-spacing:0.2px;left:-1px;width:28px;text-align:center;">12</div>
<div class="a" style="left:0px;top:465px;width:28px;height:1px;background:#c0c0c0"></div>
<div class="a t" style="top:449px;font-size:14px;line-height:18px;color:#262626;letter-spacing:0.2px;left:-1px;width:28px;text-align:center;">13</div>
<div class="a" style="left:0px;top:483px;width:28px;height:1px;background:#c0c0c0"></div>
<div class="a t" style="top:467px;font-size:14px;line-height:18px;color:#262626;letter-spacing:0.2px;left:-1px;width:28px;text-align:center;">14</div>
<div class="a" style="left:0px;top:501px;width:28px;height:1px;background:#c0c0c0"></div>
<div class="a t" style="top:485px;font-size:14px;line-height:18px;color:#262626;letter-spacing:0.2px;left:-1px;width:28px;text-align:center;">15</div>
<div class="a" style="left:0px;top:519px;width:28px;height:1px;background:#c0c0c0"></div>
<div class="a t" style="top:503px;font-size:14px;line-height:18px;color:#262626;letter-spacing:0.2px;left:-1px;width:28px;text-align:center;">16</div>
<div class="a" style="left:0px;top:537px;width:28px;height:1px;background:#c0c0c0"></div>
<div class="a t" style="top:521px;font-size:14px;line-height:18px;color:#262626;letter-spacing:0.2px;left:-1px;width:28px;text-align:center;">17</div>
<div class="a" style="left:0px;top:555px;width:28px;height:1px;background:#c0c0c0"></div>
<div class="a t" style="top:539px;font-size:14px;line-height:18px;color:#262626;letter-spacing:0.2px;left:-1px;width:28px;text-align:center;">18</div>
<div class="a" style="left:0px;top:573px;width:28px;height:1px;background:#c0c0c0"></div>
<div class="a t" style="top:557px;font-size:14px;line-height:18px;color:#262626;letter-spacing:0.2px;left:-1px;width:28px;text-align:center;">19</div>
<div class="a" style="left:0px;top:591px;width:28px;height:1px;background:#c0c0c0"></div>
<div class="a t" style="top:575px;font-size:14px;line-height:18px;color:#262626;letter-spacing:0.2px;left:-1px;width:28px;text-align:center;">20</div>
<div class="a" style="left:0px;top:609px;width:28px;height:1px;background:#c0c0c0"></div>
<div class="a t" style="top:593px;font-size:14px;line-height:18px;color:#262626;letter-spacing:0.2px;left:-1px;width:28px;text-align:center;">21</div>
<div class="a" style="left:0px;top:627px;width:28px;height:1px;background:#c0c0c0"></div>
<div class="a t" style="top:611px;font-size:14px;line-height:18px;color:#262626;letter-spacing:0.2px;left:-1px;width:28px;text-align:center;">22</div>
<div class="a" style="left:0px;top:645px;width:28px;height:1px;background:#c0c0c0"></div>
<div class="a t" style="top:629px;font-size:14px;line-height:18px;color:#262626;letter-spacing:0.2px;left:-1px;width:28px;text-align:center;">23</div>
<div class="a" style="left:27px;top:268px;width:2px;height:90px;background:#217346"></div>
<div class="a" style="left:28px;top:249px;width:459px;height:19px;background:#d0cece"></div>
<div class="a" style="left:28px;top:267px;width:86px;height:55px;background:#f8cbad"></div>
<div class="a" style="left:113px;top:285px;width:86px;height:37px;background:#f8cbad"></div>
<div class="a" style="left:198px;top:303px;width:86px;height:19px;background:#f8cbad"></div>
<div class="a" style="left:283px;top:267px;width:118px;height:55px;background:#f8cbad"></div>
<div class="a" style="left:401px;top:268px;width:84px;height:18px;background:#e2efda"></div>
<div class="a" style="left:401px;top:286px;width:84px;height:71px;background:#b1b9a9"></div>
<div class="a" style="left:29px;top:285px;width:254px;height:1px;background-image:repeating-linear-gradient(90deg,#222 0,#222 1px,transparent 1px,transparent 2px)"></div>
<div class="a" style="left:29px;top:303px;width:254px;height:1px;background-image:repeating-linear-gradient(90deg,#222 0,#222 1px,transparent 1px,transparent 2px)"></div>
<div class="a" style="left:284px;top:285px;width:116px;height:1px;background-image:repeating-linear-gradient(90deg,#222 0,#222 1px,transparent 1px,transparent 2px)"></div>
<div class="a" style="left:284px;top:303px;width:116px;height:1px;background-image:repeating-linear-gradient(90deg,#222 0,#222 1px,transparent 1px,transparent 2px)"></div>
<div class="a" style="left:401px;top:285px;width:84px;height:1px;background-image:repeating-linear-gradient(90deg,#222 0,#222 1px,transparent 1px,transparent 2px)"></div>
<div class="a" style="left:401px;top:303px;width:84px;height:1px;background-image:repeating-linear-gradient(90deg,#222 0,#222 1px,transparent 1px,transparent 2px)"></div>
<div class="a" style="left:113px;top:250px;width:1px;height:71px;background-image:repeating-linear-gradient(180deg,#222 0,#222 1px,transparent 1px,transparent 2px)"></div>
<div class="a" style="left:198px;top:250px;width:1px;height:71px;background-image:repeating-linear-gradient(180deg,#222 0,#222 1px,transparent 1px,transparent 2px)"></div>
<div class="a" style="left:28px;top:249px;width:459px;height:1px;background:#1a1a1a"></div>
<div class="a" style="left:28px;top:267px;width:373px;height:1px;background:#1a1a1a"></div>
<div class="a" style="left:28px;top:321px;width:373px;height:1px;background:#1a1a1a"></div>
<div class="a" style="left:283px;top:249px;width:1px;height:73px;background:#1a1a1a"></div>
<div class="a" style="left:400px;top:249px;width:1px;height:19px;background:#1a1a1a"></div>
<div class="a" style="left:486px;top:249px;width:1px;height:19px;background:#1a1a1a"></div>
<div class="a" style="left:402px;top:321px;width:82px;height:1px;background:#1a1a1a"></div>
<div class="a" style="left:402px;top:339px;width:82px;height:1px;background:#1a1a1a"></div>
<div class="a t" style="top:233px;font-size:14px;line-height:18px;color:#000;letter-spacing:0px;left:31px;">WZhesv</div>
<div class="a t" style="top:251px;font-size:14px;line-height:18px;color:#000;letter-spacing:0px;left:31px;">A</div>
<div class="a t" style="top:251px;font-size:14px;line-height:18px;color:#000;letter-spacing:0px;left:286px;">B</div>
<div class="a t" style="top:251px;font-size:14px;line-height:18px;color:#000;letter-spacing:0px;left:403px;">X</div>
<div class="a t" style="top:269px;font-size:14px;line-height:18px;color:#000;letter-spacing:0px;right:951px;text-align:right;">0.2</div>
<div class="a t" style="top:287px;font-size:14px;line-height:18px;color:#000;letter-spacing:0px;left:31px;"><i class="m">-</i>0.11<i class="m">-</i>0.93i</div>
<div class="a t" style="top:287px;font-size:14px;line-height:18px;color:#000;letter-spacing:0px;right:866px;text-align:right;"><i class="m">-</i>0.32</div>
<div class="a t" style="top:305px;font-size:14px;line-height:18px;color:#000;letter-spacing:0px;left:31px;">0.81+0.37i</div>
<div class="a t" style="top:305px;font-size:14px;line-height:18px;color:#000;letter-spacing:0px;left:116px;"><i class="m">-</i>0.8<i class="m">-</i>0.92i</div>
<div class="a t" style="top:305px;font-size:14px;line-height:18px;color:#000;letter-spacing:0px;right:781px;text-align:right;"><i class="m">-</i>0.29</div>
<div class="a t" style="top:269px;font-size:14px;line-height:18px;color:#000;letter-spacing:0px;left:286px;"><i class="m">-</i>0.122+0.1844i</div>
<div class="a t" style="top:287px;font-size:14px;line-height:18px;color:#000;letter-spacing:0px;left:286px;">0.0034<i class="m">-</i>0.4346i</div>
<div class="a t" style="top:305px;font-size:14px;line-height:18px;color:#000;letter-spacing:0px;left:286px;">0.5339<i class="m">-</i>0.1571i</div>
<div class="a t" style="top:269px;font-size:14px;line-height:18px;color:#111;letter-spacing:0px;left:403px;">D3:D5)</div>
<div class="a t" style="top:287px;font-size:14px;line-height:18px;color:#111;letter-spacing:0px;left:403px;">0.51+0.71i</div>
<div class="a t" style="top:305px;font-size:14px;line-height:18px;color:#111;letter-spacing:0px;left:403px;">0.590000000000000</div>
<div class="a t" style="top:323px;font-size:14px;line-height:18px;color:#111;letter-spacing:0px;right:579.5px;text-align:right;">0.04461587</div>
<div class="a t" style="top:341px;font-size:14px;line-height:18px;color:#111;letter-spacing:0px;right:579.5px;text-align:right;">0</div>
<div class="a" style="left:399px;top:266px;width:88px;height:93px;border:2px solid #217346"></div>
<div class="a" style="left:482px;top:354px;width:6px;height:6px;background:#fff"></div>
<div class="a" style="left:483px;top:355px;width:5px;height:5px;background:#217346"></div>
<div class="a" style="left:522px;top:212px;width:478px;height:388px;background:#f0f0f0;border:1px solid #5f5f5f;box-shadow:3px 4px 14px 1px rgba(0,0,0,.42)"></div>
<div class="a" style="left:523px;top:213px;width:476px;height:30px;background:#fff"></div>
<div class="jt " style="left:529.70px;top:219.20px;width:61.30px;height:16.80px;font-size:9.6px"><svg width="61.30" height="16.80" viewBox="0 0 61.30 16.80" fill="#000"><text x="0.92" y="12.96" font-size="12" textLength="58.7" lengthAdjust="spacingAndGlyphs">関数の引数</text></svg></div>
<div class="a t" style="top:219.6px;font-size:12px;line-height:16px;color:#000;font-weight:bold;left:928px;">?</div>
<svg class="a" style="left:970px;top:221px" width="13" height="13" viewBox="0 0 13 13" ><path d="M1.200 1.200L11.300 11.300M11.300 1.200L1.200 11.300" stroke="#111" stroke-width="1.100" fill="none"/></svg>
<div class="a" style="left:530px;top:258px;width:462px;height:152px;border:1px solid #dcdcdc"></div>
<div class="a" style="left:534px;top:252px;width:48px;height:13px;background:#f0f0f0"></div>
<div class="a t" style="top:250.6px;font-size:12.5px;line-height:16px;color:#000;letter-spacing:0.15px;left:535.5px;">WZhesv</div>
<div class="a t" style="top:277.9px;font-size:12.5px;line-height:16px;color:#000;letter-spacing:0.15px;right:493px;text-align:right;">Uplo</div>
<div class="a" style="left:578px;top:274px;width:198px;height:23px;background:#fff;border:1px solid #aaa;box-shadow:inset 0 0 0 1px #ececec"></div>
<div class="a" style="left:581.5px;top:278px;width:17.5px;height:13.5px;background:#c6c6c6"></div>
<div class="a" style="left:599px;top:278px;width:1px;height:14px;background:#000"></div>
<div class="a t" style="top:277px;font-size:12.5px;line-height:16px;color:#000;letter-spacing:0.15px;left:582px;">&quot;L&quot;</div>
<div class="a" style="left:754px;top:275px;width:21px;height:21px;background:#d6d6d6"></div>
<div class="a" style="left:757px;top:277.5px;width:15.5px;height:16px;background:#f5f5f5"></div>
<svg class="a" style="left:759.8px;top:279px" width="10" height="11" viewBox="0 0 10 11" ><path d="M4.600 .3L8.700 4.700H5.800V7.500H3.400V4.700H.5z" fill="#000"/><rect x=".4" y="8.400" width="8.400" height="1.400" fill="#000"/></svg>
<div class="a t" style="top:277px;font-size:14.5px;line-height:19px;color:#000;left:785.3px;">=</div>
<div class="a t" style="top:278.1px;font-size:12.5px;line-height:16px;color:#000;letter-spacing:0.469px;left:804px;">&quot;L&quot;</div>
<div class="a t" style="top:304.9px;font-size:12.5px;line-height:16px;color:#000;letter-spacing:0.15px;right:493px;text-align:right;">N</div>
<div class="a" style="left:578px;top:301px;width:198px;height:23px;background:#fff;border:1px solid #aaa;box-shadow:inset 0 0 0 1px #ececec"></div>
<div class="a t" style="top:304px;font-size:12.5px;line-height:16px;color:#000;letter-spacing:0.15px;left:582px;">3</div>
<div class="a" style="left:754px;top:302px;width:21px;height:21px;background:#d6d6d6"></div>
<div class="a" style="left:757px;top:304.5px;width:15.5px;height:16px;background:#f5f5f5"></div>
<svg class="a" style="left:759.8px;top:306px" width="10" height="11" viewBox="0 0 10 11" ><path d="M4.600 .3L8.700 4.700H5.800V7.500H3.400V4.700H.5z" fill="#000"/><rect x=".4" y="8.400" width="8.400" height="1.400" fill="#000"/></svg>
<div class="a t" style="top:304px;font-size:14.5px;line-height:19px;color:#000;left:785.3px;">=</div>
<div class="a t" style="top:305.1px;font-size:12.5px;line-height:16px;color:#000;letter-spacing:0.048px;left:804px;">3</div>
<div class="a t" style="top:331.9px;font-size:12.5px;line-height:16px;color:#000;letter-spacing:0.15px;right:493px;text-align:right;">A</div>
<div class="a" style="left:578px;top:328px;width:198px;height:23px;background:#fff;border:1px solid #aaa;box-shadow:inset 0 0 0 1px #ececec"></div>
<div class="a t" style="top:331px;font-size:12.5px;line-height:16px;color:#000;letter-spacing:0.15px;left:582px;">A3:C5</div>
<div class="a" style="left:754px;top:329px;width:21px;height:21px;background:#d6d6d6"></div>
<div class="a" style="left:757px;top:331.5px;width:15.5px;height:16px;background:#f5f5f5"></div>
<svg class="a" style="left:759.8px;top:333px" width="10" height="11" viewBox="0 0 10 11" ><path d="M4.600 .3L8.700 4.700H5.800V7.500H3.400V4.700H.5z" fill="#000"/><rect x=".4" y="8.400" width="8.400" height="1.400" fill="#000"/></svg>
<div class="a t" style="top:331px;font-size:14.5px;line-height:19px;color:#000;left:785.3px;">=</div>
<div class="a t" style="top:332.1px;font-size:12.5px;line-height:16px;color:#000;letter-spacing:0.474px;left:804px;">{0.2,0,0;&quot;-0.11-0.93i&quot;,-0.32,...</div>
<div class="a t" style="top:358.9px;font-size:12.5px;line-height:16px;color:#000;letter-spacing:0.15px;right:493px;text-align:right;">B</div>
<div class="a" style="left:578px;top:355px;width:198px;height:23px;background:#fff;border:1px solid #aaa;box-shadow:inset 0 0 0 1px #ececec"></div>
<div class="a t" style="top:358px;font-size:12.5px;line-height:16px;color:#000;letter-spacing:0.15px;left:582px;">D3:D5</div>
<div class="a" style="left:754px;top:356px;width:21px;height:21px;background:#d6d6d6"></div>
<div class="a" style="left:757px;top:358.5px;width:15.5px;height:16px;background:#f5f5f5"></div>
<svg class="a" style="left:759.8px;top:360px" width="10" height="11" viewBox="0 0 10 11" ><path d="M4.600 .3L8.700 4.700H5.800V7.500H3.400V4.700H.5z" fill="#000"/><rect x=".4" y="8.400" width="8.400" height="1.400" fill="#000"/></svg>
<div class="a t" style="top:358px;font-size:14.5px;line-height:19px;color:#000;left:785.3px;">=</div>
<div class="a t" style="top:359.1px;font-size:12.5px;line-height:16px;color:#000;letter-spacing:0.492px;left:804px;">{&quot;-0.122+0.1844i&quot;;&quot;0.0034-0...</div>
<div class="a t" style="top:385.9px;font-size:12.5px;line-height:16px;color:#000;letter-spacing:0.15px;right:493px;text-align:right;">Nrhs</div>
<div class="a" style="left:578px;top:382px;width:198px;height:23px;background:#fff;border:1px solid #aaa;box-shadow:inset 0 0 0 1px #ececec"></div>
<div class="a" style="left:754px;top:383px;width:21px;height:21px;background:#d6d6d6"></div>
<div class="a" style="left:757px;top:385.5px;width:15.5px;height:16px;background:#f5f5f5"></div>
<svg class="a" style="left:759.8px;top:387px" width="10" height="11" viewBox="0 0 10 11" ><path d="M4.600 .3L8.700 4.700H5.800V7.500H3.400V4.700H.5z" fill="#000"/><rect x=".4" y="8.400" width="8.400" height="1.400" fill="#000"/></svg>
<div class="a t" style="top:385px;font-size:14.5px;line-height:19px;color:#000;left:785.3px;">=</div>
<div class="a t" style="top:416.3px;font-size:14.5px;line-height:19px;color:#000;left:785.3px;">=</div>
<div class="a t" style="top:417.1px;font-size:12.5px;line-height:16px;color:#000;letter-spacing:0.6px;left:804px;">{&quot;0.86+0.64i&quot;;&quot;0.51+0.71i&quot;;&quot;...</div>
<div class="jt " style="left:527.30px;top:435.40px;width:86.10px;height:16.80px;font-size:9.6px"><svg width="86.10" height="16.80" viewBox="0 0 86.10 16.80" fill="#000"><text x="1.57" y="12.96" font-size="12" textLength="82.9" lengthAdjust="spacingAndGlyphs">連立一次方程式</text></svg></div>
<div class="a t" style="top:436px;font-size:12.5px;line-height:16px;color:#000;letter-spacing:-0.45px;left:618px;">AX</div>
<div class="a t" style="top:435.6px;font-size:14.5px;line-height:19px;color:#000;left:638.6px;">=</div>
<div class="a t" style="top:436px;font-size:12.5px;line-height:16px;color:#000;left:651.6px;">B</div>
<div class="jt " style="left:661.30px;top:435.40px;width:25.00px;height:16.80px;font-size:9.6px"><svg width="25.00" height="16.80" viewBox="0 0 25.00 16.80" fill="#000"><text x="1.10" y="12.96" font-size="12" textLength="22.3" lengthAdjust="spacingAndGlyphs">の解</text></svg></div>
<div class="jt " style="left:688.50px;top:435.40px;width:79.50px;height:16.80px;font-size:9.6px"><svg width="79.50" height="16.80" viewBox="0 0 79.50 16.80" fill="#000"><text x="0.93" y="12.96" font-size="12" textLength="77.6" lengthAdjust="spacingAndGlyphs">(エルミート行列)</text></svg></div>
<div class="jt " style="left:770.30px;top:435.40px;width:102.20px;height:16.80px;font-size:9.6px"><svg width="102.20" height="16.80" viewBox="0 0 102.20 16.80" fill="#000"><text x="0.86" y="12.96" font-size="12" textLength="100.4" lengthAdjust="spacingAndGlyphs">(Excel複素数形式)</text></svg></div>
<div class="a t" style="top:463.8px;font-size:12.5px;line-height:16px;color:#000;letter-spacing:-0.202px;left:701.6px;">Uplo</div>
<div class="a t" style="top:463.8px;font-size:12.5px;line-height:16px;color:#000;left:735.8px;">:</div>
<div class="jt " style="left:743.00px;top:463.40px;width:104.50px;height:16.80px;font-size:9.6px"><svg width="104.50" height="16.80" viewBox="0 0 104.50 16.80" fill="#000"><text x="1.38" y="12.96" font-size="12" textLength="101.6" lengthAdjust="spacingAndGlyphs">上三角/下三角指定</text></svg></div>
<div class="jt " style="left:849.50px;top:463.40px;width:15.50px;height:16.80px;font-size:9.6px"><svg width="15.50" height="16.80" viewBox="0 0 15.50 16.80" fill="#000"><text x="0.78" y="12.96" font-size="12" textLength="14" lengthAdjust="spacingAndGlyphs">(U</text></svg></div>
<div class="jt " style="left:866.00px;top:463.40px;width:32.00px;height:16.80px;font-size:9.6px"><svg width="32.00" height="16.80" viewBox="0 0 32.00 16.80" fill="#000"><text x="0.16" y="12.96" font-size="12" textLength="30.4" lengthAdjust="spacingAndGlyphs">または</text></svg></div>
<div class="jt " style="left:899.60px;top:463.40px;width:13.40px;height:16.80px;font-size:9.6px"><svg width="13.40" height="16.80" viewBox="0 0 13.40 16.80" fill="#000"><text x="0.62" y="12.96" font-size="12" textLength="12" lengthAdjust="spacingAndGlyphs">L)</text></svg></div>
<div class="a" style="left:529px;top:522px;width:463px;height:1px;background:#dadada"></div>
<div class="a" style="left:529px;top:523px;width:463px;height:1px;background:#fafafa"></div>
<div class="jt " style="left:527.30px;top:536.20px;width:61.00px;height:16.80px;font-size:9.6px"><svg width="61.00" height="16.80" viewBox="0 0 61.00 16.80" fill="#000"><text x="1.59" y="12.96" font-size="12" textLength="57.8" lengthAdjust="spacingAndGlyphs">数式の結果</text></svg></div>
<div class="a t" style="top:536.6px;font-size:14.5px;line-height:19px;color:#000;left:591.6px;">=</div>
<div class="a t" style="top:536.8px;font-size:12.5px;line-height:16px;color:#000;letter-spacing:0.417px;left:610.3px;">0.86+0.64i</div>
<div class="jt " style="left:527.60px;top:568.60px;width:103.00px;height:16.80px;font-size:9.6px"><svg width="103.00" height="16.80" viewBox="0 0 103.00 16.80" fill="#0066cc"><text x="0.28" y="12.96" font-size="12" textLength="101.8" lengthAdjust="spacingAndGlyphs">この関数のヘルプ(H)</text><rect x="2.0" y="14.0" width="99.0" height="1" /></svg></div>
<div class="a" style="left:834px;top:565px;width:74px;height:25px;background:#e1e1e1;border:2px solid #0078d7"></div>
<div class="a t" style="top:569.4px;font-size:12.5px;line-height:16px;color:#000;left:841px;width:60px;text-align:center;">OK</div>
<div class="a" style="left:918px;top:565px;width:74px;height:25px;background:#e1e1e1;border:1px solid #adadad"></div>
<div class="jt " style="left:929.00px;top:568.90px;width:50.60px;height:16.80px;font-size:9.6px"><svg width="50.60" height="16.80" viewBox="0 0 50.60 16.80" fill="#000"><text x="0.97" y="12.96" font-size="12" textLength="48.1" lengthAdjust="spacingAndGlyphs">キャンセル</text></svg></div>
</div></body></html>
